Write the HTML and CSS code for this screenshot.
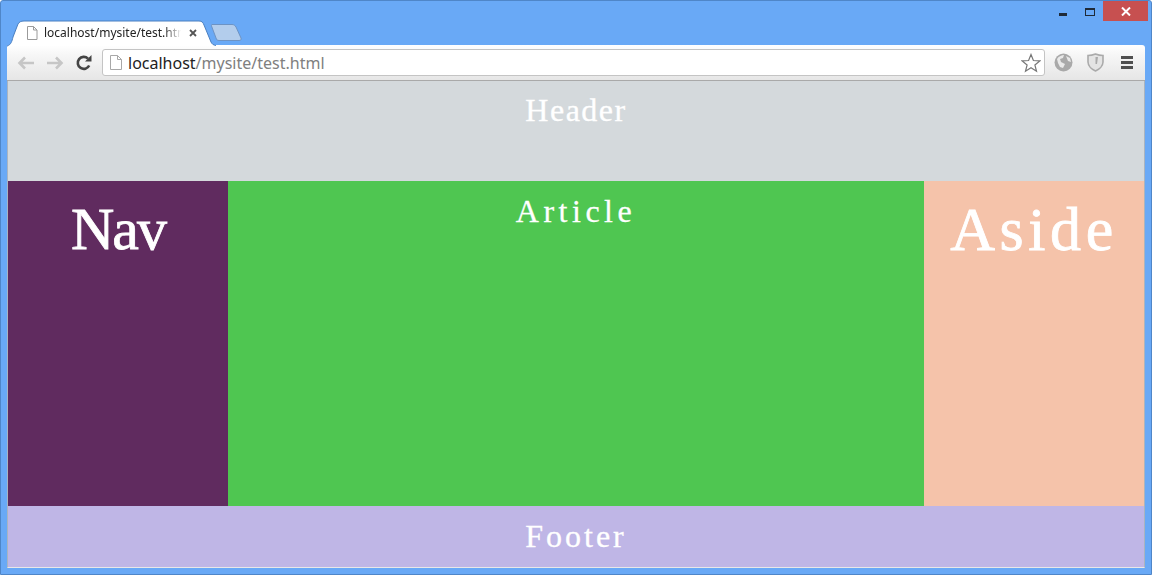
FILE: index.html
```html
<!DOCTYPE html>
<html lang="en">

<head>
    <meta charset="UTF-8">
    <title>localhost/mysite/test.html</title>
    <link rel="stylesheet" href="styles.css">
</head>

<body>
    <div class="window">
        <!-- title bar: tabs on the left, window buttons on the right -->
        <div class="titlebar">
            <div class="tab">
                <svg class="tab-shape" width="212" height="28" viewBox="0 0 212 28">
                    <path d="M1 27 C5 26 6 22 7 18 L12 5 C13 3 15 2 18 2 L193 2 C196 2 197 3.500 198 6 L205 23 C206 25 207 26 210 26.500" fill="#fff" stroke="#4a7fc0" />
                </svg>
                <svg class="page-icon" width="12" height="14" viewBox="0 0 12 14">
                    <path d="M1.500 .5 H7.500 L11 4 V13.500 H1.500 Z M7.500 .5 V4 H11" fill="#fff" stroke="#9a9a9a" />
                </svg>
                <span class="tab-title">localhost/mysite/test.html</span>
                <svg class="tab-close" width="8" height="8" viewBox="0 0 8 8">
                    <path d="M1 1 L7 7 M7 1 L1 7" stroke="#555" stroke-width="1.800" />
                </svg>
            </div>
            <svg class="new-tab" width="31" height="17" viewBox="0 0 31 17">
                <path d="M1 .5 H21 C23 .5 24 1.500 25 3 L30 14 C30.500 15.500 30 16.500 28 16.500 H8 C6 16.500 5.500 15.500 5 14 L.5 2 C.3 1 .5 .5 1 .5 Z" fill="#b3cdec" stroke="#6d93c4" />
            </svg>
            <div class="window-buttons">
                <span class="btn-min"></span>
                <span class="btn-max"></span>
                <span class="btn-close">
                    <svg width="10" height="9" viewBox="0 0 10 9">
                        <path d="M1 .5 L9 8.500 M9 .5 L1 8.500" stroke="#fff" stroke-width="2" />
                    </svg>
                </span>
            </div>
        </div>

        <!-- toolbar -->
        <div class="toolbar">
            <svg class="nav-icon" width="18" height="14" viewBox="0 0 18 14">
                <path d="M8 1.500 L2.500 7 L8 12.500 M3 7 H17" fill="none" stroke="#c6c6c6" stroke-width="2.600" />
            </svg>
            <svg class="nav-icon" width="18" height="14" viewBox="0 0 18 14">
                <path d="M10 1.500 L15.500 7 L10 12.500 M15 7 H1" fill="none" stroke="#c6c6c6" stroke-width="2.600" />
            </svg>
            <svg class="nav-icon" width="16" height="16" viewBox="0 0 16 16">
                <path d="M13.200 10.500 A6 6 0 1 1 12 3.600" fill="none" stroke="#444" stroke-width="2.600" />
                <path d="M9 6.500 H15.500 V0 Z" fill="#444" />
            </svg>
            <div class="omnibox">
                <svg class="omni-page" width="12" height="15" viewBox="0 0 12 15">
                    <path d="M.5 .5 H7.500 L11.500 4.500 V14.500 H.5 Z M7.500 .5 V4.500 H11.500" fill="#fff" stroke="#a8a8a8" />
                </svg>
                <span class="url"><span class="host">localhost</span>/mysite/test.html</span>
                <svg class="star" width="20" height="20" viewBox="0 0 20 20">
                    <path d="M10 1.500 L12.400 7.500 L18.800 7.900 L13.900 12 L15.500 18.300 L10 14.800 L4.500 18.300 L6.100 12 L1.200 7.900 L7.600 7.500 Z" fill="#fff" stroke="#777" stroke-width="1.200" />
                </svg>
            </div>
            <svg class="ext-globe" width="19" height="19" viewBox="0 0 19 19">
                <circle cx="9.500" cy="9.500" r="9" fill="#a9a9a9" />
                <path d="M3 6 C5 3 8 2 10 2 L9 5 L6 6 L7 9 L11 11 L9 15 L6 14 L4 10 Z M12 3 L16 5 L17 9 L14 8 Z" fill="#e9e9e9" />
            </svg>
            <svg class="ext-shield" width="17" height="19" viewBox="0 0 17 19">
                <path d="M1 2.500 C4 2.500 6 2 8.500 1 C11 2 13 2.500 16 2.500 V9 C16 13 12 16.500 8.500 18 C5 16.500 1 13 1 9 Z" fill="#e4e4e4" stroke="#aaa" stroke-width="1.600" />
                <path d="M8.500 4 H11 L10 11 H8.500 Z" fill="#aaa" />
            </svg>
            <div class="menu-icon"><span></span><span></span><span></span></div>
        </div>

        <!-- the page itself -->
        <div class="page">
            <header class="page-header">Header</header>
            <div class="page-main">
                <nav class="page-nav">Nav</nav>
                <article class="page-article">Article</article>
                <aside class="page-aside">Aside</aside>
            </div>
            <footer class="page-footer">Footer</footer>
        </div>
    </div>
</body>

</html>
```

FILE: styles.css
```css
html,
body {
    margin: 0;
    height: 100%;
    overflow: hidden;
}

body {
    font-family: 'Noto Sans', sans-serif;
}

.window {
    box-sizing: border-box;
    height: 575px;
    background-color: #69a9f6;
    border: 1px solid #4f86c8;
    border-radius: 3px 3px 0 0;
    padding: 0 6px 6px 6px;
    display: flex;
    flex-direction: column;
}

/* --- Title bar --- */
.titlebar {
    height: 44px;
    display: flex;
    align-items: flex-end;
    flex-shrink: 0;
}

.tab {
    position: relative;
    width: 204px;
    height: 25px;
    margin-left: 2px;
    display: flex;
    align-items: center;
    z-index: 1;
}

.tab-shape {
    position: absolute;
    left: -3px;
    top: -1px;
}

.page-icon {
    position: relative;
    margin-left: 17px;
    flex-shrink: 0;
}

.tab-title {
    position: relative;
    width: 137px;
    margin-left: 6px;
    font-size: 12px;
    color: #222;
    white-space: nowrap;
    overflow: hidden;
    -webkit-mask-image: linear-gradient(to right, #000 88%, transparent);
    mask-image: linear-gradient(to right, #000 88%, transparent);
}

.tab-close {
    position: relative;
    margin-left: 8px;
}

.new-tab {
    margin-left: -2px;
    margin-bottom: 4px;
}

.window-buttons {
    margin-left: auto;
    align-self: flex-start;
    display: flex;
    align-items: flex-start;
    margin-right: -3px;
}

.btn-min {
    width: 8px;
    height: 3px;
    margin-top: 12px;
    background-color: #1f2a38;
}

.btn-max {
    box-sizing: border-box;
    width: 10px;
    height: 8px;
    margin: 7px 0 0 18px;
    border: 1px solid #1f2a38;
    border-top-width: 2px;
}

.btn-close {
    width: 45px;
    height: 20px;
    margin-left: 8px;
    background-color: #c75050;
    display: flex;
    align-items: center;
    justify-content: center;
}

/* --- Toolbar --- */
.toolbar {
    box-sizing: border-box;
    height: 36px;
    flex-shrink: 0;
    background: linear-gradient(#ffffff, #f6f6f6 30%, #e6e6e6);
    border-bottom: 1px solid #a9a9a9;
    border-radius: 2px 3px 0 0;
    display: flex;
    align-items: center;
    padding-left: 10px;
}

.nav-icon {
    margin-right: 11px;
    flex-shrink: 0;
}

.nav-icon:nth-child(2) {
    margin-right: 12px;
}

.nav-icon:nth-child(3) {
    margin-right: 10px;
}

.omnibox {
    box-sizing: border-box;
    width: 943px;
    height: 27px;
    background-color: #fff;
    border: 1px solid #c4c4c4;
    border-radius: 3px;
    display: flex;
    align-items: center;
    padding: 0 3px 0 7px;
    flex-shrink: 0;
}

.url {
    margin-left: 6px;
    font-size: 16px;
    color: #808080;
    white-space: nowrap;
}

.host {
    color: #222;
}

.star {
    margin-left: auto;
}

.ext-globe {
    margin-left: 9px;
}

.ext-shield {
    margin-left: 14px;
}

.menu-icon {
    width: 12px;
    margin-left: 17px;
    display: flex;
    flex-direction: column;
    gap: 2px;
}

.menu-icon span {
    height: 3px;
    background-color: #505050;
}

/* --- Page --- */
.page {
    flex: 1;
    border: 1px solid #a9b4c0;
    border-width: 0 1px;
    border-bottom: 1px solid #e8e8e8;
    font-family: 'Liberation Serif', serif;
    color: #fff;
    text-align: center;
    display: flex;
    flex-direction: column;
}

.page-header {
    height: 100px;
    background-color: #d4d9dc;
    font-size: 32px;
    line-height: 58px;
    letter-spacing: 1.500px;
    -webkit-text-stroke: .3px #fff;
}

.page-main {
    height: 325px;
    display: flex;
}

.page-nav {
    width: 220px;
    background-color: #602b5f;
    font-size: 60px;
    line-height: 96px;
    letter-spacing: -2px;
    -webkit-text-stroke: .8px #fff;
}

.page-article {
    flex: 1;
    background-color: #4fc651;
    font-size: 32px;
    line-height: 60px;
    letter-spacing: 4.500px;
    -webkit-text-stroke: .3px #fff;
}

.page-aside {
    width: 220px;
    background-color: #f5c3aa;
    font-size: 62px;
    line-height: 96px;
    letter-spacing: 4.600px;
    -webkit-text-stroke: .8px #fff;
}

.page-footer {
    flex: 1;
    background-color: #bfb6e6;
    font-size: 32px;
    line-height: 60px;
    letter-spacing: 3px;
    -webkit-text-stroke: .3px #fff;
}
```
